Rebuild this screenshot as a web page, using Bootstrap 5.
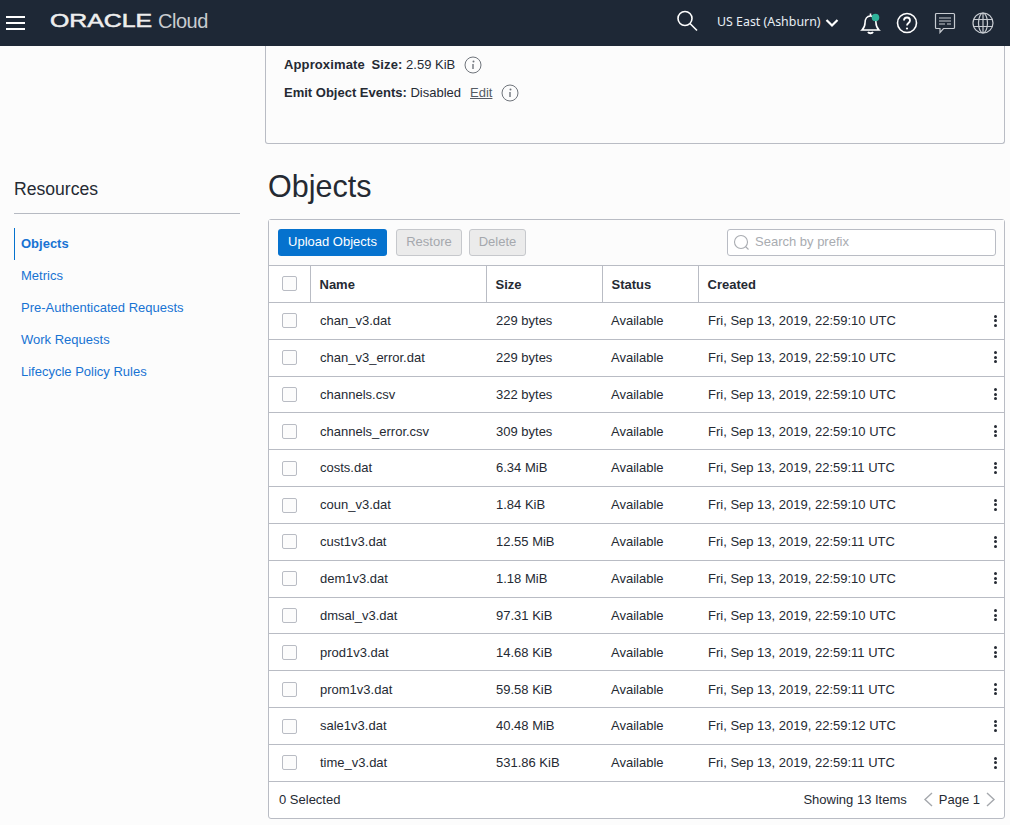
<!doctype html>
<html lang="en"><head><meta charset="utf-8"><title>Objects</title>
<link href="https://cdn.jsdelivr.net/npm/bootstrap@5.3.0/dist/css/bootstrap.min.css" rel="stylesheet">
<style>
html,body{height:825px;overflow:hidden}
body{background:#fcfcfc;font-family:"Liberation Sans",Arial,sans-serif;font-size:13px;color:#252a33}
.topbar{height:46px;background:#1e2836;color:#fff}
.menu-btn{width:19px;margin-left:6px;margin-right:25px}
.menu-btn span{display:block;height:2px;background:#fff;margin-bottom:4px}
.logo-word{display:inline-block;font-size:18px;font-weight:400;-webkit-text-stroke:.5px #eee;transform:scaleX(1.38);transform-origin:left center;width:108px;color:#eee;line-height:1;margin-bottom:5px}
.logo-cloud{font-size:20px;color:#c9ccd0;letter-spacing:-.5px;line-height:1;margin-bottom:4px}
.region{font-family:"Noto Sans",sans-serif;font-size:12.4px;color:#e8eef5;width:108px;white-space:nowrap;margin-bottom:2px}
.page-wrap{height:779px}
.side-col{width:226px;margin-left:14px;margin-right:25px;padding-top:131px}
.side-title{font-size:17.6px;font-weight:400;line-height:24px;padding-bottom:12px;border-bottom:1px solid #b6bac2;margin-bottom:14px}
.side-link{display:block;height:32px;line-height:31px;padding-left:6px;color:#1873d3;text-decoration:none;border-left:1px solid transparent}
.side-link.is-on{font-weight:700;border-left-color:#0572ce}
.main-col{width:742px}
.info-box{height:98px;width:740px;border:1px solid #b9bcc4;border-top:0;border-radius:0 0 3px 3px;padding:5px 18px;background:#fcfcfc}
.info-line{height:28px;display:flex;align-items:center;gap:9px}
.info-line b{font-weight:700}
.info-line a{color:#555b64}
.wide-gap{word-spacing:3px;letter-spacing:.12px}
.page-title{font-size:30.5px;font-weight:400;line-height:34px;margin:25px 0 16px 3px;color:#252a33}
.panel{margin-left:3px;width:737px;height:600px;background:#fff;border:1px solid #b9bcc4;border-radius:3px}
.tool-row{height:46px;padding:0 8px 0 9px;border-bottom:1px solid #b9bcc4;background:#fcfcfc}
.btn-up{background:#0572ce;color:#fff;border:0;border-radius:3px;height:27px;width:109px;font-size:13px;padding:0 0 1px}
.btn-off{background:#ebebeb;color:#a5a8ad;border:1px solid #c6c8cc;border-radius:3px;height:27px;font-size:13px;padding:0 0 1px;margin-left:9px}
.btn-off.next-off{margin-left:7px}
.search-box{margin-left:auto;width:269px;height:27px;border:1px solid #b9bcc4;border-radius:3px;color:#a9acb1;background:#fff;padding:0 0 1px 5px;gap:5px}
.obj-table{table-layout:fixed;width:735px;margin:0;border-collapse:collapse;font-size:13px}
.obj-table th,.obj-table td{padding:0 10px 0 9px;vertical-align:middle;border-bottom:1px solid #b9bcc4;color:#252a33;background:#fff;box-shadow:none}
.obj-table thead th{height:36.4px;font-weight:700;border-left:1px solid #b9bcc4;padding:1px 10px 0 9px}
.obj-table thead th:first-child{border-left:0}
.obj-table tbody td{height:36.85px}
.obj-table th.col-chk,.obj-table td.col-chk{padding:0 0 0 13px}
.chk{display:block;width:15px;height:15px;border:1px solid #b9bcc4;border-radius:2px;background:#fcfcfc}
.kebab{width:3px;float:right;margin-right:-3px;margin-top:2px}
.kebab i{display:block;width:3px;height:3px;border-radius:50%;background:#252a33;margin:1.5px 0}
.panel-foot{height:36px;padding:0 8px 0 10px}
.page-ctl{gap:6px;margin-left:16px;color:#252a33}
.name-cell{padding-left:10px!important}
</style></head>
<body>
<header class="topbar d-flex align-items-center">
  <div class="menu-btn" aria-label="menu"><span></span><span></span><span class="mb-0"></span></div>
  <span class="logo-word">ORACLE</span><span class="logo-cloud">Cloud</span>
  <div class="ms-auto d-flex align-items-center">
    <svg width="24" height="24" viewBox="0 0 24 24" fill="none" stroke="#fff" stroke-width="1.6" style="margin-right:18px;margin-bottom:4px"><circle cx="10" cy="9.500" r="7"/><path d="M15 14.500l7 7"/></svg>
    <span class="region">US East (Ashburn)</span>
    <svg width="14" height="10" viewBox="0 0 14 10" fill="none" stroke="#fff" stroke-width="2.200" style="margin-right:21px"><path d="M1.500 2l5.500 5.500L12.500 2"/></svg>
    <svg width="22" height="24" viewBox="0 0 22 24" fill="none" stroke="#fff" stroke-width="1.600" style="margin-right:14px"><path d="M2 19c2-2 3-3 3-7 0-4 2-7 5.500-7s5.500 3 5.500 7c0 4 1 5 3 7z"/><path d="M10.500 5V2.500"/><path d="M8 21c1 1.500 4 1.500 5 0" stroke-width="2"/><circle cx="15.500" cy="6.500" r="3.800" fill="#2fb39a" stroke="none"/></svg>
    <svg width="22" height="22" viewBox="0 0 22 22" fill="none" stroke="#fff" stroke-width="1.600" style="margin-right:16px"><circle cx="11" cy="11" r="9.500"/><path d="M8 8.500c0-4 6-4 6 0 0 2.500-3 2.500-3 5" stroke-width="1.800"/><circle cx="11" cy="16.500" r="1.100" fill="#fff" stroke="none"/></svg>
    <svg width="22" height="22" viewBox="0 0 22 22" fill="none" stroke="#c7cbd1" stroke-width="1.200" style="margin-right:16px"><path d="M2.500 1.500h17a1 1 0 0 1 1 1v13a1 1 0 0 1-1 1H9.500l-3.500 4v-4H2.500a1 1 0 0 1-1-1v-13a1 1 0 0 1 1-1z"/><path d="M5 6h12M5 9h12M5 12h6M13 12h4"/></svg>
    <svg width="22" height="22" viewBox="0 0 22 22" fill="none" stroke="#c7cbd1" stroke-width="1.200" style="margin-right:16px"><circle cx="11" cy="11" r="10"/><ellipse cx="11" cy="11" rx="4.500" ry="10"/><path d="M11 1v20M1.500 7.500h19M1.500 14.500h19"/></svg>
  </div>
</header>
<div class="page-wrap d-flex">
  <aside class="side-col">
    <h2 class="side-title">Resources</h2>
    <nav>
      <a class="side-link is-on" href="#">Objects</a>
      <a class="side-link" href="#">Metrics</a>
      <a class="side-link" href="#">Pre-Authenticated Requests</a>
      <a class="side-link" href="#">Work Requests</a>
      <a class="side-link" href="#">Lifecycle Policy Rules</a>
    </nav>
  </aside>
  <main class="main-col">
    <section class="info-box">
      <div class="info-line"><span><b class="wide-gap">Approximate Size:</b> 2.59 KiB</span><svg width="18" height="18" viewBox="0 0 18 18"><circle cx="9" cy="9" r="8" fill="none" stroke="#6f747b"/><circle cx="9.500" cy="5.500" r="1" fill="#6f747b"/><path d="M9 8v5" stroke="#6f747b" stroke-width="1.400"/></svg></div>
      <div class="info-line"><span><b>Emit Object Events:</b> Disabled</span><a href="#">Edit</a><svg width="18" height="18" viewBox="0 0 18 18"><circle cx="9" cy="9" r="8" fill="none" stroke="#6f747b"/><circle cx="9.500" cy="5.500" r="1" fill="#6f747b"/><path d="M9 8v5" stroke="#6f747b" stroke-width="1.400"/></svg></div>
    </section>
    <h1 class="page-title">Objects</h1>
    <section class="panel">
      <div class="tool-row d-flex align-items-center">
        <button class="btn-up">Upload Objects</button>
        <button class="btn-off" style="width:66px">Restore</button>
        <button class="btn-off next-off" style="width:57px">Delete</button>
        <div class="search-box d-flex align-items-center"><svg width="17" height="17" viewBox="0 0 17 17" fill="none" stroke="#a9acb1" stroke-width="1.100"><circle cx="8" cy="8" r="6.500"/><path d="M12.500 12.500l3 3"/></svg>Search by prefix</div>
      </div>
      <table class="table obj-table">
        <colgroup><col style="width:41px"><col style="width:176px"><col style="width:116px"><col style="width:96px"><col></colgroup>
        <thead><tr><th class="col-chk"><span class="chk"></span></th><th>Name</th><th>Size</th><th>Status</th><th>Created</th></tr></thead>
        <tbody id="rows">
<tr><td class="col-chk"><span class="chk"></span></td><td class="name-cell">chan_v3.dat</td><td class="name-cell">229 bytes</td><td>Available</td><td class="name-cell">Fri, Sep 13, 2019, 22:59:10 UTC<span class="kebab"><i></i><i></i><i></i></span></td></tr>
<tr><td class="col-chk"><span class="chk"></span></td><td class="name-cell">chan_v3_error.dat</td><td class="name-cell">229 bytes</td><td>Available</td><td class="name-cell">Fri, Sep 13, 2019, 22:59:10 UTC<span class="kebab"><i></i><i></i><i></i></span></td></tr>
<tr><td class="col-chk"><span class="chk"></span></td><td class="name-cell">channels.csv</td><td class="name-cell">322 bytes</td><td>Available</td><td class="name-cell">Fri, Sep 13, 2019, 22:59:10 UTC<span class="kebab"><i></i><i></i><i></i></span></td></tr>
<tr><td class="col-chk"><span class="chk"></span></td><td class="name-cell">channels_error.csv</td><td class="name-cell">309 bytes</td><td>Available</td><td class="name-cell">Fri, Sep 13, 2019, 22:59:10 UTC<span class="kebab"><i></i><i></i><i></i></span></td></tr>
<tr><td class="col-chk"><span class="chk"></span></td><td class="name-cell">costs.dat</td><td class="name-cell">6.34 MiB</td><td>Available</td><td class="name-cell">Fri, Sep 13, 2019, 22:59:11 UTC<span class="kebab"><i></i><i></i><i></i></span></td></tr>
<tr><td class="col-chk"><span class="chk"></span></td><td class="name-cell">coun_v3.dat</td><td class="name-cell">1.84 KiB</td><td>Available</td><td class="name-cell">Fri, Sep 13, 2019, 22:59:10 UTC<span class="kebab"><i></i><i></i><i></i></span></td></tr>
<tr><td class="col-chk"><span class="chk"></span></td><td class="name-cell">cust1v3.dat</td><td class="name-cell">12.55 MiB</td><td>Available</td><td class="name-cell">Fri, Sep 13, 2019, 22:59:11 UTC<span class="kebab"><i></i><i></i><i></i></span></td></tr>
<tr><td class="col-chk"><span class="chk"></span></td><td class="name-cell">dem1v3.dat</td><td class="name-cell">1.18 MiB</td><td>Available</td><td class="name-cell">Fri, Sep 13, 2019, 22:59:10 UTC<span class="kebab"><i></i><i></i><i></i></span></td></tr>
<tr><td class="col-chk"><span class="chk"></span></td><td class="name-cell">dmsal_v3.dat</td><td class="name-cell">97.31 KiB</td><td>Available</td><td class="name-cell">Fri, Sep 13, 2019, 22:59:10 UTC<span class="kebab"><i></i><i></i><i></i></span></td></tr>
<tr><td class="col-chk"><span class="chk"></span></td><td class="name-cell">prod1v3.dat</td><td class="name-cell">14.68 KiB</td><td>Available</td><td class="name-cell">Fri, Sep 13, 2019, 22:59:11 UTC<span class="kebab"><i></i><i></i><i></i></span></td></tr>
<tr><td class="col-chk"><span class="chk"></span></td><td class="name-cell">prom1v3.dat</td><td class="name-cell">59.58 KiB</td><td>Available</td><td class="name-cell">Fri, Sep 13, 2019, 22:59:11 UTC<span class="kebab"><i></i><i></i><i></i></span></td></tr>
<tr><td class="col-chk"><span class="chk"></span></td><td class="name-cell">sale1v3.dat</td><td class="name-cell">40.48 MiB</td><td>Available</td><td class="name-cell">Fri, Sep 13, 2019, 22:59:12 UTC<span class="kebab"><i></i><i></i><i></i></span></td></tr>
<tr><td class="col-chk"><span class="chk"></span></td><td class="name-cell">time_v3.dat</td><td class="name-cell">531.86 KiB</td><td>Available</td><td class="name-cell">Fri, Sep 13, 2019, 22:59:11 UTC<span class="kebab"><i></i><i></i><i></i></span></td></tr>
        </tbody>
      </table>
      <div class="panel-foot d-flex align-items-center">
        <span>0 Selected</span>
        <span class="ms-auto">Showing 13 Items</span>
        <span class="page-ctl d-flex align-items-center">
          <svg width="10" height="15" viewBox="0 0 10 15" fill="none" stroke="#a5a8ad" stroke-width="1.400"><path d="M9 1L2 7.500 9 14"/></svg>
          <span>Page 1</span>
          <svg width="10" height="15" viewBox="0 0 10 15" fill="none" stroke="#a5a8ad" stroke-width="1.400"><path d="M1 1l7 6.500L1 14"/></svg>
        </span>
      </div>
    </section>
  </main>
</div>
</body></html>
